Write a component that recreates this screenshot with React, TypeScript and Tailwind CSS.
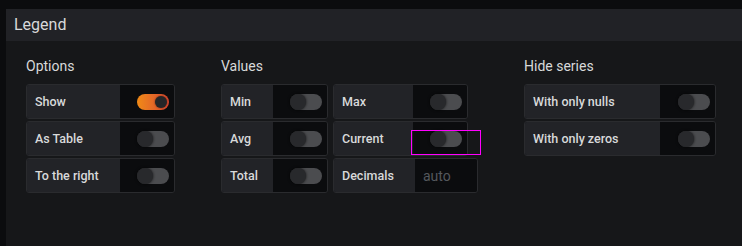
import React from "react";

function Switch({ on }: { on?: boolean }) {
  return on ? (
    <div className="relative h-4 w-8 rounded-full bg-gradient-to-r from-[#f08a14] to-[#d8452e]">
      <div className="absolute right-[2px] top-[2px] h-3 w-3 rounded-full bg-[#252628] shadow-[0_0_2px_rgba(0,0,0,0.6)]" />
    </div>
  ) : (
    <div className="relative h-4 w-8 rounded-full bg-[#4b4c4f]">
      <div className="absolute left-0 top-0 h-4 w-4 rounded-full bg-[#28292c] shadow-[0_0_3px_rgba(0,0,0,0.8)]" />
    </div>
  );
}

function SwitchRow({
  label,
  labelW,
  swW = 55,
  on,
  children,
}: {
  label: string;
  labelW: string;
  swW?: number;
  on?: boolean;
  children?: React.ReactNode;
}) {
  return (
    <div className="flex h-[35px] rounded-[3px] border border-[#2a2b2e] overflow-hidden">
      <div className={`${labelW} flex items-center bg-[#222327] pl-2 pt-[2px] text-[12.5px] font-medium text-[#d8d9da]`}>
        {label}
      </div>
      {children ?? (
        <div
          className="relative flex items-center justify-end bg-[#0b0c0e] pr-[5px]"
          style={{ width: swW }}
        >
          <Switch on={on} />
        </div>
      )}
    </div>
  );
}

export default function App() {
  return (
    <div
      className="h-[246px] w-[742px] overflow-hidden bg-[#0b0c0e] pl-[6px] pt-[9px]"
      style={{ fontFamily: "Roboto, 'Liberation Sans', sans-serif" }}
    >
      <div className="h-[260px] rounded-tl-[3px] bg-[#161719]">
        <div className="flex h-8 items-center bg-[#212226] pl-2 text-[16px] text-[#d8d9da]">
          Legend
        </div>
        <div className="flex gap-[46px] pl-5 pt-[15px]">
          {/* Options */}
          <div className="flex flex-col">
            <div className="mb-[7px] h-[21px] text-[14px] leading-[21px] text-[#d8d9da]">Options</div>
            <div className="flex w-[149px] flex-col gap-[2px]">
              <SwitchRow label="Show" labelW="w-[94px]" on />
              <SwitchRow label="As Table" labelW="w-[94px]" />
              <SwitchRow label="To the right" labelW="w-[94px]" />
            </div>
          </div>
          {/* Values */}
          <div className="flex flex-col">
            <div className="mb-[7px] h-[21px] text-[14px] leading-[21px] text-[#d8d9da]">Values</div>
            <div className="flex gap-[5px]">
              <div className="flex w-[107px] flex-col gap-[2px]">
                <SwitchRow label="Min" labelW="w-[52px]" />
                <SwitchRow label="Avg" labelW="w-[52px]" />
                <SwitchRow label="Total" labelW="w-[52px]" />
              </div>
              <div className="flex flex-col gap-[2px]">
                <div className="w-[135px]">
                  <SwitchRow label="Max" labelW="w-[80px]" />
                </div>
                <div className="relative w-[135px]">
                  <SwitchRow label="Current" labelW="w-[80px]" />
                  <div className="pointer-events-none absolute left-[78px] top-[9px] h-[25px] w-[70px] border border-[#f0f]" />
                </div>
                <div className="w-[145px]">
                  <SwitchRow label="Decimals" labelW="w-[81px]">
                    <div className="flex flex-1 items-center bg-[#0b0c0e] pl-2 pt-[1px] text-[14px] text-[#55585d]">
                      auto
                    </div>
                  </SwitchRow>
                </div>
              </div>
            </div>
          </div>
          {/* Hide series */}
          <div className="flex flex-col">
            <div className="mb-[7px] h-[21px] text-[14px] leading-[21px] text-[#d8d9da]">Hide series</div>
            <div className="flex w-[192px] flex-col gap-[2px]">
              <SwitchRow label="With only nulls" labelW="w-[136px]" swW={56} />
              <SwitchRow label="With only zeros" labelW="w-[136px]" swW={56} />
            </div>
          </div>
        </div>
      </div>
    </div>
  );
}
